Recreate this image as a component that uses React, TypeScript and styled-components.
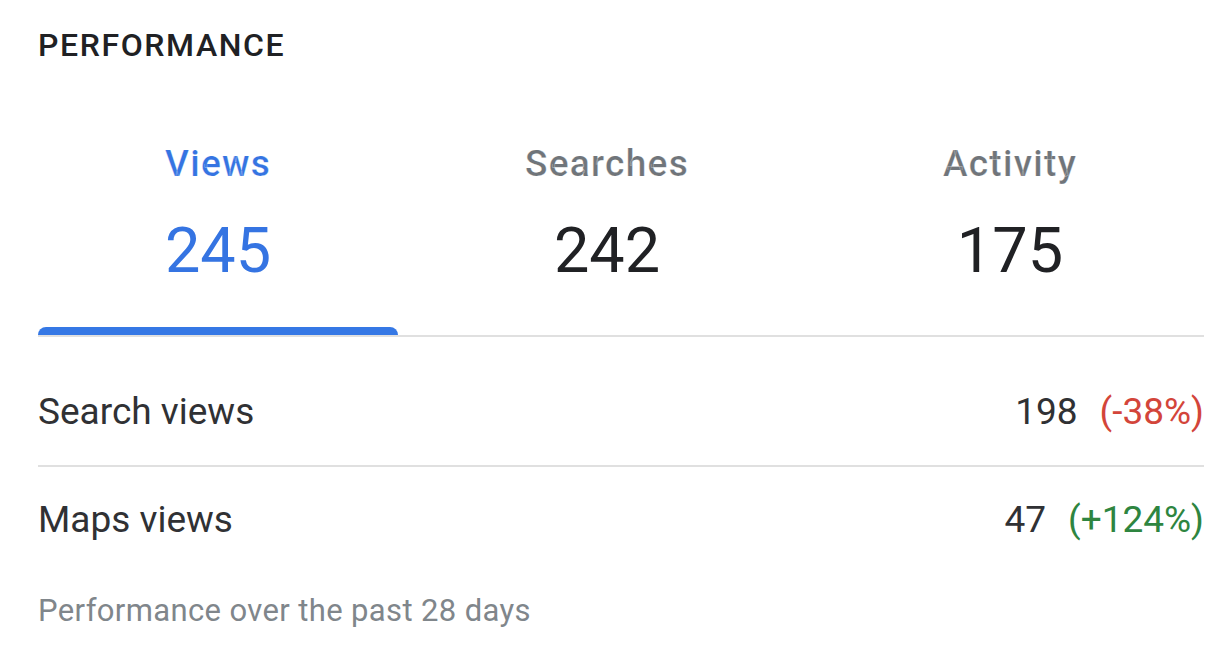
import React from "react";
import styled, { createGlobalStyle } from "styled-components";

const GlobalStyle = createGlobalStyle`
  html, body {
    margin: 0;
    padding: 0;
    background: #ffffff;
  }
  body {
    font-family: Roboto, "Liberation Sans", Arial, sans-serif;
    color: #202124;
  }
`;

const Card = styled.section`
  padding: 25px 26px 0 38px;
  box-sizing: border-box;
  width: 1230px;
`;

const Title = styled.h2`
  margin: 0;
  font-size: 32px;
  line-height: 40px;
  font-weight: 500;
  letter-spacing: 0.05em;
  text-transform: uppercase;
  color: #202124;
`;

const TabBar = styled.div`
  display: flex;
  margin-top: 75px;
  border-bottom: 2px solid #e0e0e0;
`;

const Tab = styled.div<{ $active?: boolean }>`
  flex: 1 1 auto;
  display: flex;
  flex-direction: column;
  align-items: center;
  cursor: pointer;
  color: ${(p) => (p.$active ? "#3574e2" : "#202124")};
`;

const TabLabel = styled.div<{ $active?: boolean }>`
  font-size: 37px;
  line-height: 48px;
  font-weight: 500;
  letter-spacing: 0.035em;
  -webkit-text-stroke: 0.2px #ffffff;
  color: ${(p) => (p.$active ? "#3574e2" : "#70757a")};
`;

const TabValue = styled.div`
  margin-top: 27px;
  font-size: 63px;
  line-height: 72px;
  font-weight: 400;
`;

const Indicator = styled.div<{ $active?: boolean }>`
  align-self: stretch;
  height: 8px;
  margin-top: 40px;
  border-radius: 8px 8px 0 0;
  background: ${(p) => (p.$active ? "#3578e5" : "transparent")};
`;

const List = styled.div`
  padding-top: 22px;
`;

const Row = styled.div<{ $divider?: boolean }>`
  display: flex;
  align-items: center;
  justify-content: space-between;
  height: 106px;
  border-bottom: ${(p) => (p.$divider ? "2px solid #e0e0e0" : "none")};
`;

const RowLabel = styled.div`
  font-size: 37px;
  line-height: 44px;
  color: #303134;
`;

const RowValue = styled.div`
  display: flex;
  gap: 22px;
  font-size: 37px;
  line-height: 44px;
  color: #303134;
`;

const Change = styled.span<{ $up?: boolean }>`
  color: ${(p) => (p.$up ? "#2e8540" : "#d3453a")};
`;

const Footer = styled.p`
  margin: 20px 0 0;
  font-size: 31px;
  line-height: 36px;
  letter-spacing: 0.012em;
  color: #80868b;
`;

const tabs = [
  { label: "Views", value: "245", active: true },
  { label: "Searches", value: "242" },
  { label: "Activity", value: "175" },
];

const rows = [
  { label: "Search views", value: "198", change: "(-38%)", up: false },
  { label: "Maps views", value: "47", change: "(+124%)", up: true },
];

export default function App() {
  return (
    <>
      <GlobalStyle />
      <Card>
        <Title>Performance</Title>
        <TabBar>
          {tabs.map((t) => (
            <Tab key={t.label} $active={t.active}>
              <TabLabel $active={t.active}>{t.label}</TabLabel>
              <TabValue>{t.value}</TabValue>
              <Indicator $active={t.active} />
            </Tab>
          ))}
        </TabBar>
        <List>
          {rows.map((r, i) => (
            <Row key={r.label} $divider={i < rows.length - 1}>
              <RowLabel>{r.label}</RowLabel>
              <RowValue>
                <span>{r.value}</span>
                <Change $up={r.up}>{r.change}</Change>
              </RowValue>
            </Row>
          ))}
        </List>
        <Footer>Performance over the past 28 days</Footer>
      </Card>
    </>
  );
}
